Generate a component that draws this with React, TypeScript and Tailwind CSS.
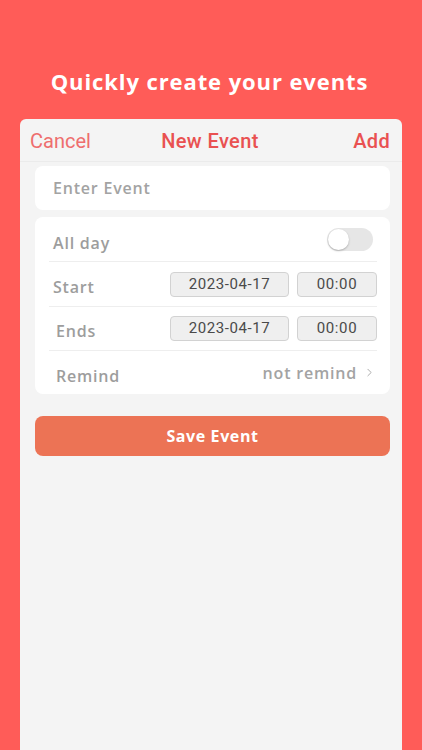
import { ChevronRight } from "lucide-react"

const labelFont = { fontFamily: '"Open Sans", "Noto Sans", sans-serif' }
const headFont = { fontFamily: 'Roboto, "Liberation Sans", Arial, sans-serif' }

function DateField({ value, wide }: { value: string; wide?: boolean }) {
  return (
    <div
      className={`flex h-[25px] items-center justify-center rounded-[4px] border border-[#d2d2d2] bg-[#efefef] text-[15px] font-normal tracking-[0.6px] text-[#4a4a4a] ${
        wide ? "w-[119px]" : "w-[80px]"
      }`}
      style={headFont}
    >
      {value}
    </div>
  )
}

export default function App() {
  return (
    <div className="flex h-[750px] w-full flex-col overflow-hidden bg-[#ff5c58]" style={labelFont}>
      <h1 className="pt-[68px] pr-[3px] text-center text-[22px] font-bold leading-[26px] tracking-[0.9px] text-white">
        Quickly create your events
      </h1>

      <div className="mx-[20px] mt-[25px] flex flex-1 flex-col rounded-t-[6px] bg-[#f4f4f4]">
        {/* nav bar */}
        <div
          className="grid h-[43px] grid-cols-[1fr_auto_1fr] items-center border-b border-[#ebebeb] pl-[10px] pr-[12px] pt-[2px] text-[20px]"
          style={headFont}
        >
          <span className="text-[#ee6e6e]">Cancel</span>
          <span className="font-medium tracking-[0.4px] text-[#e95151]">New Event</span>
          <span className="text-right font-medium tracking-[0.3px] text-[#e95151]">Add</span>
        </div>

        <div className="flex flex-col pl-[15px] pr-[12px]">
          <div className="mt-[4px] flex h-[44px] items-center rounded-[8px] bg-white pl-[18px] text-[16px] font-semibold tracking-[0.8px] text-[#a3a3a3]">
            Enter Event
          </div>

          <div className="mt-[7px] flex flex-col rounded-[8px] bg-white pl-[14px] pr-[13px] text-[16px] font-semibold tracking-[0.8px]">
            <div className="flex h-[45px] items-center justify-between border-b border-[#eeeeee] pl-[4px] pr-[4px]">
              <span className="pt-[8px] text-[#9d9d9d]">All day</span>
              <div className="flex h-[23px] w-[46px] items-center rounded-full bg-[#e6e6e6] p-[1px]">
                <div className="h-[21px] w-[21px] rounded-full bg-white shadow-[0_1px_2px_rgba(0,0,0,0.25)]" />
              </div>
            </div>

            <div className="flex h-[45px] items-center justify-between border-b border-[#eeeeee] pl-[4px]">
              <span className="pt-[5px] text-[#9d9d9d]">Start</span>
              <div className="flex gap-[8px]">
                <DateField value="2023-04-17" wide />
                <DateField value="00:00" />
              </div>
            </div>

            <div className="flex h-[44px] items-center justify-between border-b border-[#eeeeee] pl-[7px]">
              <span className="pt-[4px] text-[#9d9d9d]">Ends</span>
              <div className="flex gap-[8px]">
                <DateField value="2023-04-17" wide />
                <DateField value="00:00" />
              </div>
            </div>

            <div className="flex h-[43px] items-center justify-between pl-[7px]">
              <span className="pt-[6px] text-[#9d9d9d]">Remind</span>
              <div className="flex items-center gap-[6px] pr-[1px] text-[#a3a3a3]">
                <span>not remind</span>
                <ChevronRight className="h-[13px] w-[13px] text-[#a8a8a8]" strokeWidth={1.75} />
              </div>
            </div>
          </div>

          <button className="mt-[22px] flex h-[40px] items-center justify-center rounded-[8px] bg-[#ec7355] text-[16px] font-bold tracking-[0.6px] text-white">
            Save Event
          </button>
        </div>
      </div>
    </div>
  )
}
